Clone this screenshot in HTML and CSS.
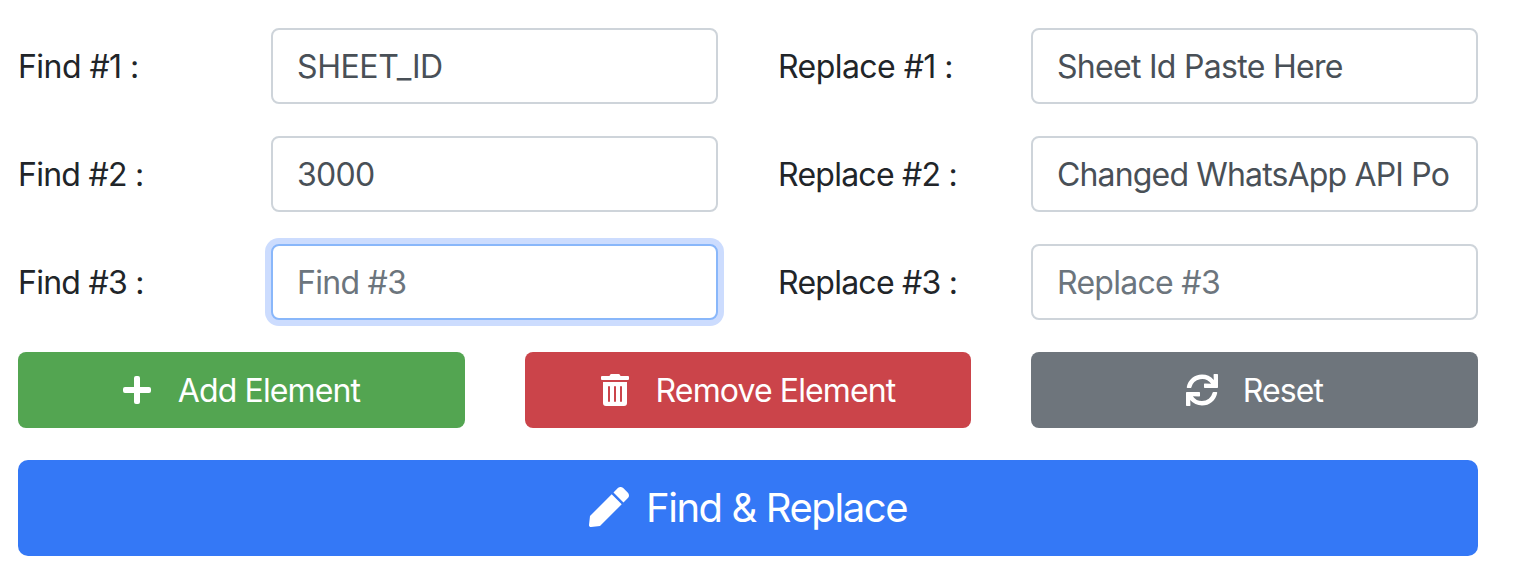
FILE: index.html
```html
<!DOCTYPE html>
<html lang="en">
<head>
<meta charset="utf-8">
<title>Find &amp; Replace</title>
<link rel="stylesheet" href="styles.css">
</head>
<body>
<form class="form">
  <div class="row">
    <label class="first" for="find1">Find #1 :</label><input class="input caps" id="find1" value="SHEET_ID">
    <label class="first" for="replace1">Replace #1 :</label><input class="input" id="replace1" value="Sheet Id Paste Here">
  </div>
  <div class="row">
    <label for="find2">Find #2 :</label><input class="input" id="find2" value="3000">
    <label for="replace2">Replace #2 :</label><input class="input long" id="replace2" value="Changed WhatsApp API Po">
  </div>
  <div class="row">
    <label for="find3">Find #3 :</label><input class="input focus" id="find3" placeholder="Find #3">
    <label for="replace3">Replace #3 :</label><input class="input" id="replace3" placeholder="Replace #3">
  </div>
  <div class="actions">
    <button type="button" class="btn add">
      <svg class="icon plus" viewBox="0 0 28 28"><path fill="currentColor" d="M13 0h2a2 2 0 0 1 2 2v9h9a2 2 0 0 1 2 2v2a2 2 0 0 1-2 2h-9v9a2 2 0 0 1-2 2h-2a2 2 0 0 1-2-2v-9H2a2 2 0 0 1-2-2v-2a2 2 0 0 1 2-2h9V2a2 2 0 0 1 2-2z"/></svg>
      <span>Add Element</span>
    </button>
    <button type="button" class="btn remove">
      <svg class="icon trash" viewBox="0 0 28 32"><path fill="currentColor" fill-rule="evenodd" d="M10.400 0h7.200a1.500 1.500 0 0 1 1.300.8L19.500 2H27a1 1 0 0 1 1 1v2a1 1 0 0 1-1 1H1a1 1 0 0 1-1-1V3a1 1 0 0 1 1-1h7.500l.6-1.200a1.500 1.500 0 0 1 1.300-.8zM2 8h24v21a3 3 0 0 1-3 3H5a3 3 0 0 1-3-3zM7 13v14a1 1 0 0 0 2 0V13a1 1 0 0 0-2 0zM13 13v14a1 1 0 0 0 2 0V13a1 1 0 0 0-2 0zM19 13v14a1 1 0 0 0 2 0V13a1 1 0 0 0-2 0z"/></svg>
      <span>Remove Element</span>
    </button>
    <button type="button" class="btn reset">
      <svg class="icon sync" viewBox="0 0 512 512"><path fill="currentColor" d="M440.650 12.570l4 82.770A247.160 247.160 0 0 0 255.830 8C134.730 8 33.910 94.920 12.290 209.820A12 12 0 0 0 24.090 224h49.050a12 12 0 0 0 11.670-9.260 175.910 175.910 0 0 1 317-56.940l-101.460-4.860a12 12 0 0 0-12.570 12v47.410a12 12 0 0 0 12 12H500a12 12 0 0 0 12-12V12a12 12 0 0 0-12-12h-47.370a12 12 0 0 0-11.980 12.570zM255.830 432a175.610 175.610 0 0 1-146-77.800l101.800 4.870a12 12 0 0 0 12.570-12v-47.400a12 12 0 0 0-12-12H12a12 12 0 0 0-12 12V500a12 12 0 0 0 12 12h47.350a12 12 0 0 0 12-12.600l-4.150-82.570A247.170 247.170 0 0 0 255.830 504c121.110 0 221.930-86.920 243.550-201.820a12 12 0 0 0-11.800-14.180h-49.050a12 12 0 0 0-11.670 9.260A175.860 175.860 0 0 1 255.830 432z"/></svg>
      <span>Reset</span>
    </button>
  </div>
  <button type="button" class="btn submit">
    <svg class="icon pencil" viewBox="0 0 512 512"><path fill="currentColor" d="M290.740 93.240l128.020 128.020-277.990 277.990-114.140 12.600C11.350 513.540-1.560 500.620.140 485.340l12.700-114.220 277.900-277.880zm207.200-19.060l-60.110-60.110c-18.750-18.750-49.160-18.750-67.910 0l-56.550 56.550 128.020 128.020 56.550-56.550c18.750-18.760 18.750-49.160 0-67.910z"/></svg>
    <span>Find &amp; Replace</span>
  </button>
</form>
</body>
</html>
```
FILE: styles.css
```css
* { box-sizing: border-box; }
body { margin: 0; background: #fff; color: #212529; font-family: Inter, sans-serif; font-size: 32px; font-weight: 435; line-height: 48px; letter-spacing: -0.75px; }
.form { padding: 28px 56px 0 18px; display: flex; flex-direction: column; gap: 32px; }
.row { display: grid; grid-template-columns: 253px 447px 313px 447px; height: 76px; align-items: center; }
.row label { padding-top: 2px; white-space: nowrap; }
.row label:nth-of-type(2) { margin-left: 60px; }
.row .first { letter-spacing: -0.55px; }
.input { width: 100%; height: 76px; margin: 0; padding: 12px 24px; border: 2px solid #ced4da; border-radius: 8px; outline: 0; background: #fff; color: #495057; font: inherit; letter-spacing: -0.71px; }
.input::placeholder { color: #6c757d; opacity: 1; }
.caps { letter-spacing: -0.4px; }
.long { letter-spacing: -0.84px; }
.focus { border-color: #89b7fa; box-shadow: 0 0 0 6px #ccdcfe; }
.actions { display: grid; grid-template-columns: 447px 446px 447px; column-gap: 60px; }
.btn { display: flex; align-items: center; justify-content: center; height: 76px; padding: 0; border: 0; border-radius: 8px; color: #fff; font: inherit; letter-spacing: -0.88px; white-space: nowrap; }
.btn span { padding-top: 2px; }
.add { background: #53a551; }
.remove { background: #cb444a; }
.reset { background: #6e757c; }
.btn.submit { height: 96px; padding-bottom: 2px; border-radius: 10px; background: #3478f6; font-size: 40px; letter-spacing: -1.42px; }
.icon { flex: none; }
.plus { width: 28px; height: 28px; margin-right: 27px; }
.trash { width: 28px; height: 32px; margin-right: 27px; }
.sync { width: 32px; height: 32px; margin-right: 25px; }
.pencil { width: 40px; height: 40px; margin-right: 17px; }
```
